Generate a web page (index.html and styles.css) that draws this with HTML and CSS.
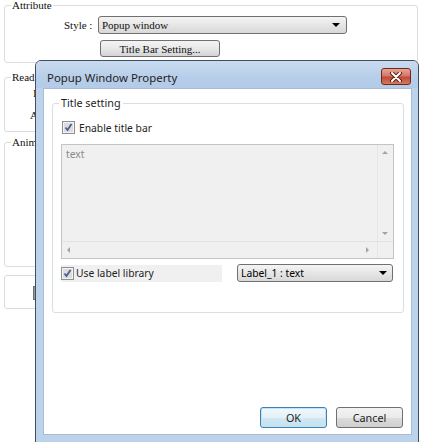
FILE: index.html
```html
<!DOCTYPE html>
<html lang="en">
<head>
    <meta charset="utf-8" />
    <title>Popup Window Property</title>
    <link rel="stylesheet" href="styles.css">
</head>
<body>
    <div id="screen">
        <div class="group attr">
            <span class="group-title">Attribute</span>
            <div class="style-row">
                <span class="style-label">Style :</span>
                <div class="combo serif-combo">
                    <span>Popup window</span>
                    <span class="arrow"></span>
                </div>
            </div>
            <button class="serif-btn">Title Bar Setting...</button>
        </div>

        <div class="group read">
            <span class="group-title">Read</span>
            <div class="read-line first">Index :</div>
            <div class="read-line second">Area :</div>
        </div>

        <div class="group anim">
            <span class="group-title">Animation</span>
        </div>

        <div class="group misc">
            <span class="handle"></span>
        </div>

        <!-- popup dialog on top of the attribute page -->
        <div id="dialog">
            <div class="titlebar">
                <span class="caption">Popup Window Property</span>
                <span class="close">
                    <svg width="14" height="10" viewBox="0 0 14 10">
                        <path d="M3 1 L11 9 M11 1 L3 9" stroke="#5a1e14" stroke-width="4" stroke-linecap="round"/>
                        <path d="M3 1 L11 9 M11 1 L3 9" stroke="#ffffff" stroke-width="2" stroke-linecap="round"/>
                    </svg>
                </span>
            </div>
            <div class="client">
                <div class="dgroup">
                    <span class="dgroup-title">Title setting</span>
                    <label class="check enable">
                        <span class="box">
                            <svg width="13" height="13" viewBox="0 0 13 13">
                                <rect x="0.5" y="0.5" width="12" height="12" fill="#f4f4f4" stroke="#8e8f8f"/>
                                <rect x="2" y="2" width="9" height="9" fill="#dcdcdc"/>
                                <path d="M3.5 6.5 L5.5 9 L9.5 3" fill="none" stroke="#4b5d92" stroke-width="1.8"/>
                            </svg>
                        </span>
                        Enable title bar
                    </label>
                    <div class="textbox">
                        <div class="tb-text">text</div>
                        <div class="vscroll">
                            <span class="tri up"></span>
                            <span class="tri down"></span>
                        </div>
                        <div class="hscroll">
                            <span class="tri left"></span>
                            <span class="tri right"></span>
                        </div>
                        <div class="corner"></div>
                    </div>
                    <div class="lib-row">
                        <label class="check lib">
                            <span class="box">
                                <svg width="13" height="13" viewBox="0 0 13 13">
                                    <rect x="0.5" y="0.5" width="12" height="12" fill="#f4f4f4" stroke="#8e8f8f"/>
                                    <rect x="2" y="2" width="9" height="9" fill="#dcdcdc"/>
                                    <path d="M3.5 6.5 L5.5 9 L9.5 3" fill="none" stroke="#4b5d92" stroke-width="1.8"/>
                                </svg>
                            </span>
                            Use label library
                        </label>
                        <div class="combo lib-combo">
                            <span>Label_1 : text</span>
                            <span class="arrow"></span>
                        </div>
                    </div>
                </div>
                <div class="buttons">
                    <button class="dbtn ok">OK</button>
                    <button class="dbtn">Cancel</button>
                </div>
            </div>
        </div>
    </div>
</body>
</html>
```

FILE: styles.css
```css
body {
    margin: 0;
    background: #ffffff;
}

#screen {
    position: relative;
    width: 427px;
    height: 442px;
    overflow: hidden;
    font-family: "Liberation Serif", serif;
    font-size: 11px;
    color: #111;
}

/* background page */
.group {
    box-sizing: border-box;
    width: 414px;
    margin-left: 4px;
    border: 1px solid #dcdcdc;
    border-radius: 3px;
}

.group-title {
    display: block;
    width: fit-content;
    height: 12px;
    line-height: 12px;
    margin: -7px 0 -5px 6px;
    padding: 0 1px;
    background: #fff;
    white-space: nowrap;
}

.attr {
    margin-top: 5px;
    height: 58px;
}

.style-row {
    display: flex;
    align-items: center;
    margin: 10px 0 0 59px;
}

.style-label {
    width: 28px;
    margin-right: 6px;
    white-space: nowrap;
}

.combo {
    box-sizing: border-box;
    display: flex;
    align-items: center;
    justify-content: space-between;
    height: 18px;
    border: 1px solid #707070;
    border-radius: 3px;
    background: linear-gradient(#f4f4f4, #e6e6e6 50%, #d8d8d8);
    padding: 0 6px 0 3px;
    white-space: nowrap;
}

.serif-combo {
    width: 249px;
}

.arrow {
    width: 0;
    height: 0;
    border-left: 4px solid transparent;
    border-right: 4px solid transparent;
    border-top: 4px solid #000;
}

.serif-btn {
    display: block;
    box-sizing: border-box;
    width: 120px;
    height: 17px;
    margin: 6px 0 0 95px;
    padding: 0;
    border: 1px solid #707070;
    border-radius: 3px;
    background: linear-gradient(#f4f4f4, #e8e8e8 50%, #d4d4d4);
    font-family: "Liberation Serif", serif;
    font-size: 11px;
    color: #111;
}

.read {
    margin-top: 14px;
    height: 55px;
}

.read-line {
    line-height: 12px;
    white-space: nowrap;
}

.read-line.first {
    margin-top: 9px;
    padding-left: 28px;
}

.read-line.second {
    margin-top: 10px;
    padding-left: 25px;
}

.anim {
    margin-top: 10px;
    height: 125px;
}

.misc {
    margin-top: 8px;
    height: 34px;
}

.handle {
    display: block;
    width: 4px;
    height: 12px;
    margin: 10px 0 0 28px;
    background: #9a9a9a;
    border: 1px solid #6e6e6e;
}

/* dialog */
#dialog {
    position: absolute;
    left: 35px;
    top: 60px;
    box-sizing: border-box;
    width: 384px;
    height: 384px;
    border: 1px solid #3f4d5c;
    border-radius: 6px 6px 0 0;
    background: #bdd3ec;
    display: flex;
    flex-direction: column;
    padding: 0 6px 8px 7px;
    font-family: "Noto Sans", sans-serif;
    font-size: 10.3px;
}

.titlebar {
    position: relative;
    height: 27px;
    margin: 0 -6px 0 -7px;
    border-radius: 5px 5px 0 0;
    background: linear-gradient(#c9dbef, #b7cee9 60%, #b3cbe8);
    display: flex;
    align-items: center;
}

.caption {
    margin-left: 11px;
    margin-top: 5px;
    font-size: 11.4px;
    color: #1e1e1e;
}

.close {
    position: absolute;
    left: 345px;
    top: 7px;
    box-sizing: border-box;
    width: 30px;
    height: 17px;
    border: 1px solid #6b2a1e;
    border-radius: 3px;
    background: linear-gradient(#e8a493, #d5776a 45%, #c14a36 55%, #d57a5c);
    display: flex;
    align-items: center;
    justify-content: center;
}

.client {
    flex: 1;
    background: #ffffff;
    border: 1px solid #a7bdd6;
    display: flex;
    flex-direction: column;
}

.dgroup {
    box-sizing: border-box;
    height: 210px;
    margin: 14px 7px 0 8px;
    border: 1px solid #d5dfe5;
    border-radius: 3px;
    padding: 0 9px 0 8px;
}

.dgroup-title {
    display: block;
    width: fit-content;
    height: 14px;
    line-height: 14px;
    margin: -8px 0 0 -2px;
    padding: 0 2px;
    background: #fff;
    color: #1e1e1e;
    font-size: 10.8px;
    white-space: nowrap;
}

.check {
    display: flex;
    align-items: center;
    color: #1e1e1e;
    white-space: nowrap;
}

.check .box {
    display: block;
    width: 13px;
    height: 13px;
    margin-right: 4px;
}

.check svg {
    display: block;
}

.enable {
    margin: 11px 0 0 1px;
    height: 13px;
}

.textbox {
    box-sizing: border-box;
    height: 115px;
    margin-top: 10px;
    border: 1px solid #c4c4c4;
    background: #f0f0f0;
    display: grid;
    grid-template-columns: 1fr 16px;
    grid-template-rows: 1fr 17px;
}

.tb-text {
    padding: 2px 4px;
    color: #8a8a8a;
}

.vscroll {
    position: relative;
    border-left: 1px solid #e6e6e6;
}

.hscroll {
    position: relative;
    border-top: 1px solid #e2e2e2;
}

.corner {
    border-top: 1px solid #e2e2e2;
    border-left: 1px solid #e6e6e6;
}

.tri {
    position: absolute;
    width: 0;
    height: 0;
}

.tri.up {
    left: 4px;
    top: 6px;
    border-left: 3px solid transparent;
    border-right: 3px solid transparent;
    border-bottom: 3px solid #a3a3a3;
}

.tri.down {
    left: 4px;
    bottom: 6px;
    border-left: 3px solid transparent;
    border-right: 3px solid transparent;
    border-top: 3px solid #a3a3a3;
}

.tri.left {
    left: 5px;
    top: 5px;
    border-top: 3px solid transparent;
    border-bottom: 3px solid transparent;
    border-right: 3px solid #a3a3a3;
}

.tri.right {
    right: 8px;
    top: 5px;
    border-top: 3px solid transparent;
    border-bottom: 3px solid transparent;
    border-left: 3px solid #a3a3a3;
}

.lib-row {
    display: flex;
    align-items: center;
    justify-content: space-between;
    margin-top: 5px;
}

.lib {
    width: 161px;
    height: 17px;
    background: #f0f0f0;
}

.lib .box {
    margin-right: 2px;
}

.lib-combo {
    width: 156px;
    color: #000;
    padding: 0 5px 0 3px;
    margin-right: 1px;
}

.buttons {
    margin-top: auto;
    display: flex;
    justify-content: flex-end;
    gap: 9px;
    padding: 0 8px 6px 0;
}

.dbtn {
    box-sizing: border-box;
    width: 67px;
    height: 21px;
    padding: 0;
    border: 1px solid #707070;
    border-radius: 3px;
    background: linear-gradient(#f2f2f2, #ebebeb 50%, #dddddd 51%, #cfcfcf);
    font-family: "Noto Sans", sans-serif;
    font-size: 10.8px;
    color: #1e1e1e;
}

.dbtn.ok {
    border-color: #3c7fb1;
    box-shadow: inset 0 0 0 1px #bfe6f7;
    background: linear-gradient(#f0f8fc, #e4f1f8 50%, #d2e8f3 51%, #c6e1ef);
}
```
